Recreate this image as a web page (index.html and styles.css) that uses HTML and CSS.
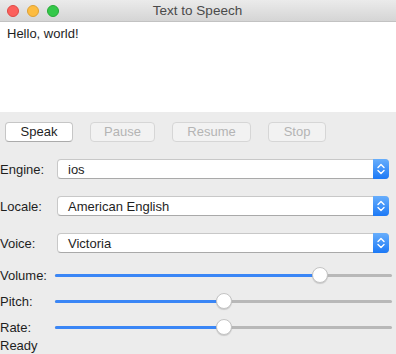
FILE: index.html
```html
<!DOCTYPE html>
<html lang="en">
<head>
    <meta charset="UTF-8">
    <meta name="viewport" content="width=device-width, initial-scale=1.0">
    <title>Text to Speech</title>
    <link rel="stylesheet" href="styles.css">
</head>
<body>
    <div class="window">
        <div class="titlebar">
            <div class="lights">
                <span class="light red"></span>
                <span class="light yellow"></span>
                <span class="light green"></span>
            </div>
            <div class="title">Text to Speech</div>
        </div>

        <div class="editor">Hello, world!</div>

        <div class="panel">
            <div class="buttons">
                <button class="btn speak">Speak</button>
                <button class="btn pause" disabled>Pause</button>
                <button class="btn resume" disabled>Resume</button>
                <button class="btn stop" disabled>Stop</button>
            </div>

            <div class="fields">
                <div class="field">
                    <span class="label">Engine:</span>
                    <div class="select">
                        <span class="value">ios</span>
                        <span class="stepper">
                            <svg width="16" height="20" viewBox="0 0 16 20"><path d="M5 8.5 L8 5.5 L11 8.5 M5 11.5 L8 14.5 L11 11.5" fill="none" stroke="#fff" stroke-width="1.4" stroke-linecap="round" stroke-linejoin="round"/></svg>
                        </span>
                    </div>
                </div>
                <div class="field">
                    <span class="label">Locale:</span>
                    <div class="select">
                        <span class="value">American English</span>
                        <span class="stepper">
                            <svg width="16" height="20" viewBox="0 0 16 20"><path d="M5 8.5 L8 5.5 L11 8.5 M5 11.5 L8 14.5 L11 11.5" fill="none" stroke="#fff" stroke-width="1.4" stroke-linecap="round" stroke-linejoin="round"/></svg>
                        </span>
                    </div>
                </div>
                <div class="field">
                    <span class="label">Voice:</span>
                    <div class="select">
                        <span class="value">Victoria</span>
                        <span class="stepper">
                            <svg width="16" height="20" viewBox="0 0 16 20"><path d="M5 8.5 L8 5.5 L11 8.5 M5 11.5 L8 14.5 L11 11.5" fill="none" stroke="#fff" stroke-width="1.4" stroke-linecap="round" stroke-linejoin="round"/></svg>
                        </span>
                    </div>
                </div>
            </div>

            <div class="sliders">
                <div class="slider-row">
                    <span class="label">Volume:</span>
                    <div class="slider">
                        <div class="fill" style="width: 265px"></div>
                        <div class="thumb" style="left: 257px"></div>
                    </div>
                </div>
                <div class="slider-row">
                    <span class="label">Pitch:</span>
                    <div class="slider">
                        <div class="fill" style="width: 169px"></div>
                        <div class="thumb" style="left: 161px"></div>
                    </div>
                </div>
                <div class="slider-row">
                    <span class="label">Rate:</span>
                    <div class="slider">
                        <div class="fill" style="width: 169px"></div>
                        <div class="thumb" style="left: 161px"></div>
                    </div>
                </div>
            </div>

            <div class="status">Ready</div>
        </div>
    </div>
</body>
</html>
```

FILE: styles.css
```css
html, body {
    margin: 0;
    padding: 0;
}
body {
    font-family: "Liberation Sans", Arial, sans-serif;
    font-size: 13px;
    color: #1e1e1e;
    background: #ececec;
}
.window {
    width: 396px;
    height: 354px;
    display: flex;
    flex-direction: column;
    background: #ececec;
    overflow: hidden;
}

/* title bar */
.titlebar {
    height: 21px;
    border-bottom: 1px solid #c2c2c2;
    background: linear-gradient(#ebebeb, #d5d5d5);
    display: flex;
    align-items: center;
}
.lights {
    display: flex;
    gap: 8px;
    padding-left: 7px;
}
.light {
    width: 12px;
    height: 12px;
    border-radius: 50%;
    box-sizing: border-box;
}
.red {
    background: #fc605c;
    border: 1px solid #de4a45;
}
.yellow {
    background: #fdbc40;
    border: 1px solid #dea133;
}
.green {
    background: #34c84a;
    border: 1px solid #27aa36;
}
.title {
    flex: 1;
    text-align: center;
    margin-left: -60px;
    color: #4a4a4a;
    font-size: 13.5px;
}

/* text area */
.editor {
    height: 84px;
    background: #fff;
    padding: 4px 7px 2px;
    line-height: 16px;
    color: #1e1e1e;
}

.panel {
    flex: 1;
    display: flex;
    flex-direction: column;
}

/* buttons */
.buttons {
    display: flex;
    gap: 17px;
    padding: 10px 0 0 5px;
}
.btn {
    height: 20px;
    padding: 0;
    box-sizing: border-box;
    border: 1px solid #c6c6c6;
    border-bottom-color: #ababab;
    border-radius: 4px;
    background: #fff;
    font-family: inherit;
    font-size: 13px;
    color: #1e1e1e;
    line-height: 18px;
}
.btn:disabled {
    background: #f2f2f2;
    border-color: #d6d6d6;
    color: #b4b4b4;
}
.speak { width: 68px; }
.pause { width: 65px; }
.resume { width: 79px; }
.stop { width: 58px; }

/* combo boxes */
.fields {
    display: flex;
    flex-direction: column;
    gap: 17px;
    margin-top: 17px;
}
.field {
    display: flex;
    align-items: center;
    height: 20px;
}
.label {
    width: 57px;
    flex-shrink: 0;
}
.select {
    width: 332px;
    height: 20px;
    box-sizing: border-box;
    display: flex;
    align-items: center;
    background: #fff;
    border: 1px solid #c8c8c8;
    border-bottom-color: #a9a9a9;
    border-radius: 4px;
}
.select .value {
    flex: 1;
    padding-left: 10px;
}
.stepper {
    width: 16px;
    height: 20px;
    margin: -1px -1px -1px 0;
    border-radius: 0 4px 4px 0;
    background: linear-gradient(#67aefc, #1c79f6);
    display: flex;
}

/* sliders */
.sliders {
    display: flex;
    flex-direction: column;
    gap: 8px;
    margin-top: 13px;
}
.slider-row {
    display: flex;
    align-items: center;
    height: 18px;
}
.slider-row .label {
    width: 55px;
}
.slider {
    position: relative;
    width: 337px;
    height: 3px;
    border-radius: 2px;
    background: #b8b8b8;
}
.fill {
    height: 3px;
    border-radius: 2px;
    background: #3a86f6;
}
.thumb {
    position: absolute;
    top: -7px;
    width: 16px;
    height: 16px;
    box-sizing: border-box;
    border-radius: 50%;
    background: #fff;
    border: 1px solid #c4c4c4;
    box-shadow: 0 1px 1px rgba(0, 0, 0, 0.15);
}

.status {
    margin-top: 2px;
    line-height: 16px;
}
```
